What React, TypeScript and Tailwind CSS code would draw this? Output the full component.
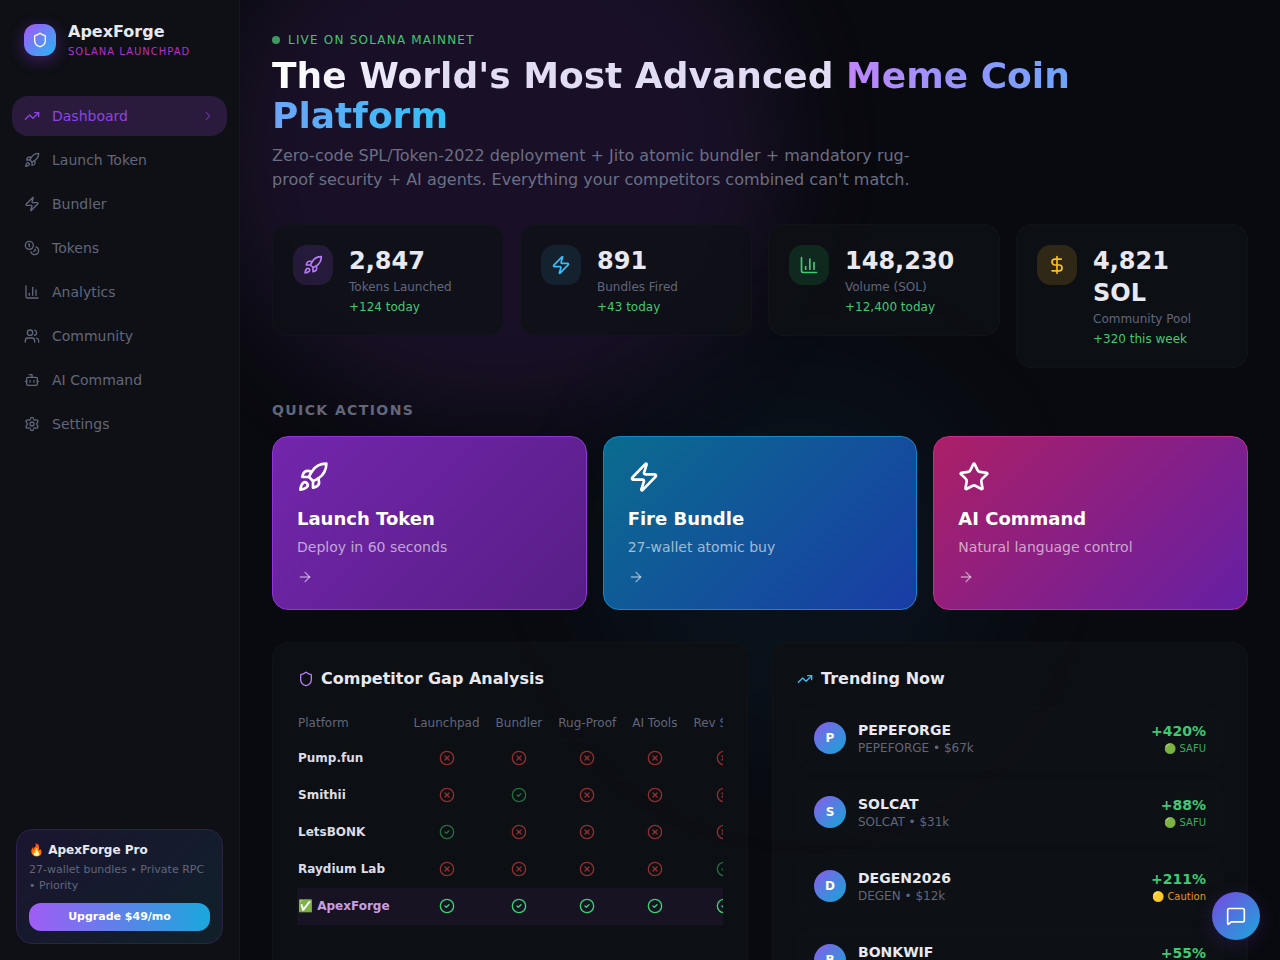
import React from 'react'
import {
  ArrowRight,
  Bot,
  ChartColumn,
  ChevronRight,
  CircleCheck,
  CircleX,
  Coins,
  DollarSign,
  MessageSquare,
  Rocket,
  Settings,
  Shield,
  Star,
  TrendingUp,
  Users,
  Zap
} from 'lucide-react'

const navItems = [
  { label: 'Dashboard', icon: TrendingUp, active: true },
  { label: 'Launch Token', icon: Rocket },
  { label: 'Bundler', icon: Zap },
  { label: 'Tokens', icon: Coins },
  { label: 'Analytics', icon: ChartColumn },
  { label: 'Community', icon: Users },
  { label: 'AI Command', icon: Bot },
  { label: 'Settings', icon: Settings }
]

const stats = [
  { value: '2,847', label: 'Tokens Launched', delta: '+124 today', icon: Rocket, box: 'bg-[#a855f7]/15', color: 'text-[#b57bf5]' },
  { value: '891', label: 'Bundles Fired', delta: '+43 today', icon: Zap, box: 'bg-[#38bdf8]/10', color: 'text-[#38bdf8]' },
  { value: '148,230', label: 'Volume (SOL)', delta: '+12,400 today', icon: ChartColumn, box: 'bg-[#22c55e]/15', color: 'text-[#3ecb76]' },
  { value: '4,821 SOL', label: 'Community Pool', delta: '+320 this week', icon: DollarSign, box: 'bg-[#fbbf24]/15', color: 'text-[#fbbf24]' }
]

const actions = [
  { title: 'Launch Token', desc: 'Deploy in 60 seconds', icon: Rocket, card: 'from-[#7326ac] to-[#571e86] border-[#9036d8]' },
  { title: 'Fire Bundle', desc: '27-wallet atomic buy', icon: Zap, card: 'from-[#0a6c8e] to-[#1a3ca6] border-[#1487c8]' },
  { title: 'AI Command', desc: 'Natural language control', icon: Star, card: 'from-[#ac1f66] to-[#651fa4] border-[#c42c90]' }
]

const columns = ['Launchpad', 'Bundler', 'Rug-Proof', 'AI Tools', 'Rev Share']

const rows = [
  { name: 'Pump.fun', checks: [false, false, false, false, false] },
  { name: 'Smithii', checks: [false, true, false, false, false] },
  { name: 'LetsBONK', checks: [true, false, false, false, false] },
  { name: 'Raydium Lab', checks: [false, false, false, false, true] },
  { name: '✅ ApexForge', checks: [true, true, true, true, true], highlight: true }
]

const trending = [
  { name: 'PEPEFORGE', sub: 'PEPEFORGE • $67k', pct: '+420%', tag: '🟢 SAFU', safe: true },
  { name: 'SOLCAT', sub: 'SOLCAT • $31k', pct: '+88%', tag: '🟢 SAFU', safe: true },
  { name: 'DEGEN2026', sub: 'DEGEN • $12k', pct: '+211%', tag: '🟡 Caution', safe: false },
  { name: 'BONKWIF', sub: 'BONK • $9k', pct: '+55%', tag: '🟢 SAFU', safe: true }
]

function Sidebar() {
  return (
    <aside className="relative z-10 flex h-screen w-[240px] shrink-0 flex-col border-r border-white/[0.03] bg-[#0e1015]">
      {/* Logo */}
      <div className="flex items-center gap-3 px-6 py-5">
        <div className="flex h-8 w-8 items-center justify-center rounded-xl bg-linear-135/srgb from-[#a855f7] to-[#22b8f5] shadow-[0_4px_16px_rgba(147,51,234,0.4)]">
          <Shield size={16} className="text-white" />
        </div>
        <div>
          <div className="text-base leading-6 font-bold text-[#e8e8f0]">ApexForge</div>
          <div className="text-[10px] leading-4 tracking-[0.1em] text-[#b432c4]">SOLANA LAUNCHPAD</div>
        </div>
      </div>

      {/* Nav */}
      <nav className="mt-4 flex flex-col gap-1 px-3">
        {navItems.map(item => {
          const Icon = item.icon
          return (
            <div
              key={item.label}
              className={`flex items-center gap-3 rounded-2xl px-3 py-2.5 text-sm leading-5 ${
                item.active ? 'bg-[#2a1b3d] text-[#8f44e0]' : 'text-[#62667a]'
              }`}
            >
              <Icon size={16} />
              <span className="flex-1">{item.label}</span>
              {item.active && <ChevronRight size={14} className="opacity-50" />}
            </div>
          )
        })}
      </nav>

      {/* Upgrade box */}
      <div className="mx-4 mt-auto mb-4 rounded-2xl border border-[#2e2347] bg-linear-135/srgb from-[#1a1530] to-[#10202a] p-3">
        <div className="text-xs leading-4 font-bold text-[#e8e8f0]">🔥 ApexForge Pro</div>
        <p className="mt-1 text-[11px] leading-4 text-[#62667a]">27-wallet bundles • Private RPC • Priority</p>
        <button className="mt-[9px] block w-full rounded-xl bg-linear-to-r/srgb from-[#a05cf6] to-[#1aa8dc] py-1.5 text-[11px] leading-4 font-bold text-white">
          Upgrade $49/mo
        </button>
      </div>
    </aside>
  )
}

function Hero() {
  return (
    <div className="mb-8">
      <div className="mb-2 flex items-center gap-2">
        <span className="h-2 w-2 rounded-full bg-[#3c9a5f]" />
        <span className="text-xs leading-4 tracking-[0.1em] text-[#3fc66f]">LIVE ON SOLANA MAINNET</span>
      </div>
      <h1 className="text-4xl leading-10 font-bold">
        <span className="bg-linear-to-r/srgb from-white to-[#e2dcf5] to-30% bg-clip-text text-transparent">
          The World's Most Advanced{' '}
        </span>
        <span className="bg-linear-to-r/srgb from-[#c084fc] via-[#6aa6f9] via-[58%] to-[#30c0f4] bg-clip-text text-transparent">
          Meme Coin Platform
        </span>
      </h1>
      <p className="mt-2 max-w-2xl text-base leading-6 text-[#6b6f83]">
        Zero-code SPL/Token-2022 deployment + Jito atomic bundler + mandatory rug-proof security + AI agents. Everything your competitors combined can't match.
      </p>
    </div>
  )
}

function StatCards() {
  return (
    <div className="mb-8 grid grid-cols-4 items-start gap-4">
      {stats.map(stat => {
        const Icon = stat.icon
        return (
          <div key={stat.label} className="flex items-start gap-4 rounded-2xl border border-white/[0.02] bg-[#0e1015]/80 p-5">
            <div className={`flex h-10 w-10 shrink-0 items-center justify-center rounded-[14px] ${stat.box}`}>
              <Icon size={20} className={stat.color} />
            </div>
            <div className="min-w-0">
              <div className="text-2xl leading-8 font-bold text-[#e8e8f0]">{stat.value}</div>
              <div className="mt-0.5 text-xs leading-4 text-[#62667a]">{stat.label}</div>
              <div className="mt-1 text-xs leading-4 text-[#42c873]">{stat.delta}</div>
            </div>
          </div>
        )
      })}
    </div>
  )
}

function QuickActions() {
  return (
    <div className="mb-8">
      <h2 className="mb-4 text-sm leading-5 font-bold tracking-[0.1em] text-[#62667a] uppercase">Quick Actions</h2>
      <div className="grid grid-cols-3 gap-4">
        {actions.map(action => {
          const Icon = action.icon
          return (
            <div key={action.title} className={`rounded-2xl border bg-linear-135/srgb p-6 ${action.card}`}>
              <Icon size={32} className="mb-3 text-white" />
              <div className="text-lg leading-7 font-bold text-white">{action.title}</div>
              <div className="mt-1 text-sm leading-5 text-white/60">{action.desc}</div>
              <ArrowRight size={16} className="mt-3 text-white/50" />
            </div>
          )
        })}
      </div>
    </div>
  )
}

function GapTable() {
  return (
    <div className="rounded-2xl border border-white/[0.02] bg-[#0d0f14]/90 p-6">
      <div className="mb-5 flex items-center gap-2 text-base leading-6 font-bold text-[#e8e8f0]">
        <Shield size={16} className="ml-px text-[#b57bf5]" />
        <span className="-ml-px">Competitor Gap Analysis</span>
      </div>
      <div className="overflow-hidden">
        <table className="border-collapse text-xs leading-4 whitespace-nowrap">
          <thead>
            <tr className="border-b border-white/[0.015]">
              <th className="pt-1 pr-4 pb-2 pl-px text-left font-normal text-[#62667a]">Platform</th>
              {columns.map(col => (
                <th key={col} className="px-2 pt-1 pb-2 text-center font-normal text-[#62667a]">{col}</th>
              ))}
            </tr>
          </thead>
          <tbody>
            {rows.map(row => (
              <tr key={row.name} className={`border-b border-white/[0.01] ${row.highlight ? 'bg-[#a855f7]/[0.07]' : ''}`}>
                <td className={`py-2.5 pr-4 pl-px font-bold ${row.highlight ? 'text-[#c89fe0]' : 'text-[#dcdce6]'}`}>{row.name}</td>
                {row.checks.map((ok, i) => (
                  <td key={i} className="px-2 py-2.5">
                    {ok ? (
                      <CircleCheck size={16} className={`mx-auto ${row.highlight ? 'text-[#3bd07a]' : 'text-[#22703f]'}`} />
                    ) : (
                      <CircleX size={16} className="mx-auto text-[#8f2f2f]" />
                    )}
                  </td>
                ))}
              </tr>
            ))}
          </tbody>
        </table>
      </div>
    </div>
  )
}

function TrendingList() {
  return (
    <div className="rounded-2xl border border-white/[0.02] bg-[#0d0f14]/90 p-6">
      <div className="mb-4 flex items-center gap-2 text-base leading-6 font-bold text-[#e8e8f0]">
        <TrendingUp size={16} className="text-[#38bdf8]" />
        Trending Now
      </div>
      <div className="flex flex-col gap-3">
        {trending.map(token => (
          <div key={token.name} className="flex items-center gap-3 rounded-2xl border border-white/[0.01] bg-white/[0.008] px-4 py-3">
            <div className="flex h-8 w-8 items-center justify-center rounded-full bg-linear-135/srgb from-[#8b5ce8] to-[#10a8d8] text-xs font-bold text-white">
              {token.name[0]}
            </div>
            <div className="flex-1">
              <div className="text-sm leading-5 font-bold text-[#e8e8f0]">{token.name}</div>
              <div className="text-xs leading-4 text-[#62667a]">{token.sub}</div>
            </div>
            <div className="text-right">
              <div className="text-sm leading-[22px] font-bold text-[#42c873]">{token.pct}</div>
              <div className={`text-[10px] leading-[14px] ${token.safe ? 'text-[#3fa866]' : 'text-[#e8961a]'}`}>{token.tag}</div>
            </div>
          </div>
        ))}
      </div>
    </div>
  )
}

export default function App() {
  return (
    <div className="relative flex h-screen overflow-hidden bg-[#090a0f] font-['DejaVu_Sans',sans-serif]">
      <Sidebar />

      <main className="relative min-w-0 flex-1 overflow-hidden p-8">
        {/* Background glows */}
        <div className="pointer-events-none absolute -top-[110px] -left-[20px] h-[520px] w-[560px] rounded-full bg-[#8a3fd0]/[0.13] blur-[50px]" />
        <div className="pointer-events-none absolute top-[360px] left-[360px] h-[400px] w-[400px] rounded-full bg-[#0ea5e9]/[0.05] blur-[60px]" />

        <div className="relative">
          <Hero />
          <StatCards />
          <QuickActions />
          <div className="grid grid-cols-2 gap-6">
            <GapTable />
            <TrendingList />
          </div>
        </div>
      </main>

      {/* Chat button */}
      <button className="fixed right-5 bottom-5 z-20 flex h-12 w-12 items-center justify-center rounded-full bg-linear-135/srgb from-[#7848e0] to-[#1aa8dc] text-white shadow-[0_4px_20px_rgba(124,58,237,0.2)]">
        <MessageSquare size={20} />
      </button>
    </div>
  )
}
